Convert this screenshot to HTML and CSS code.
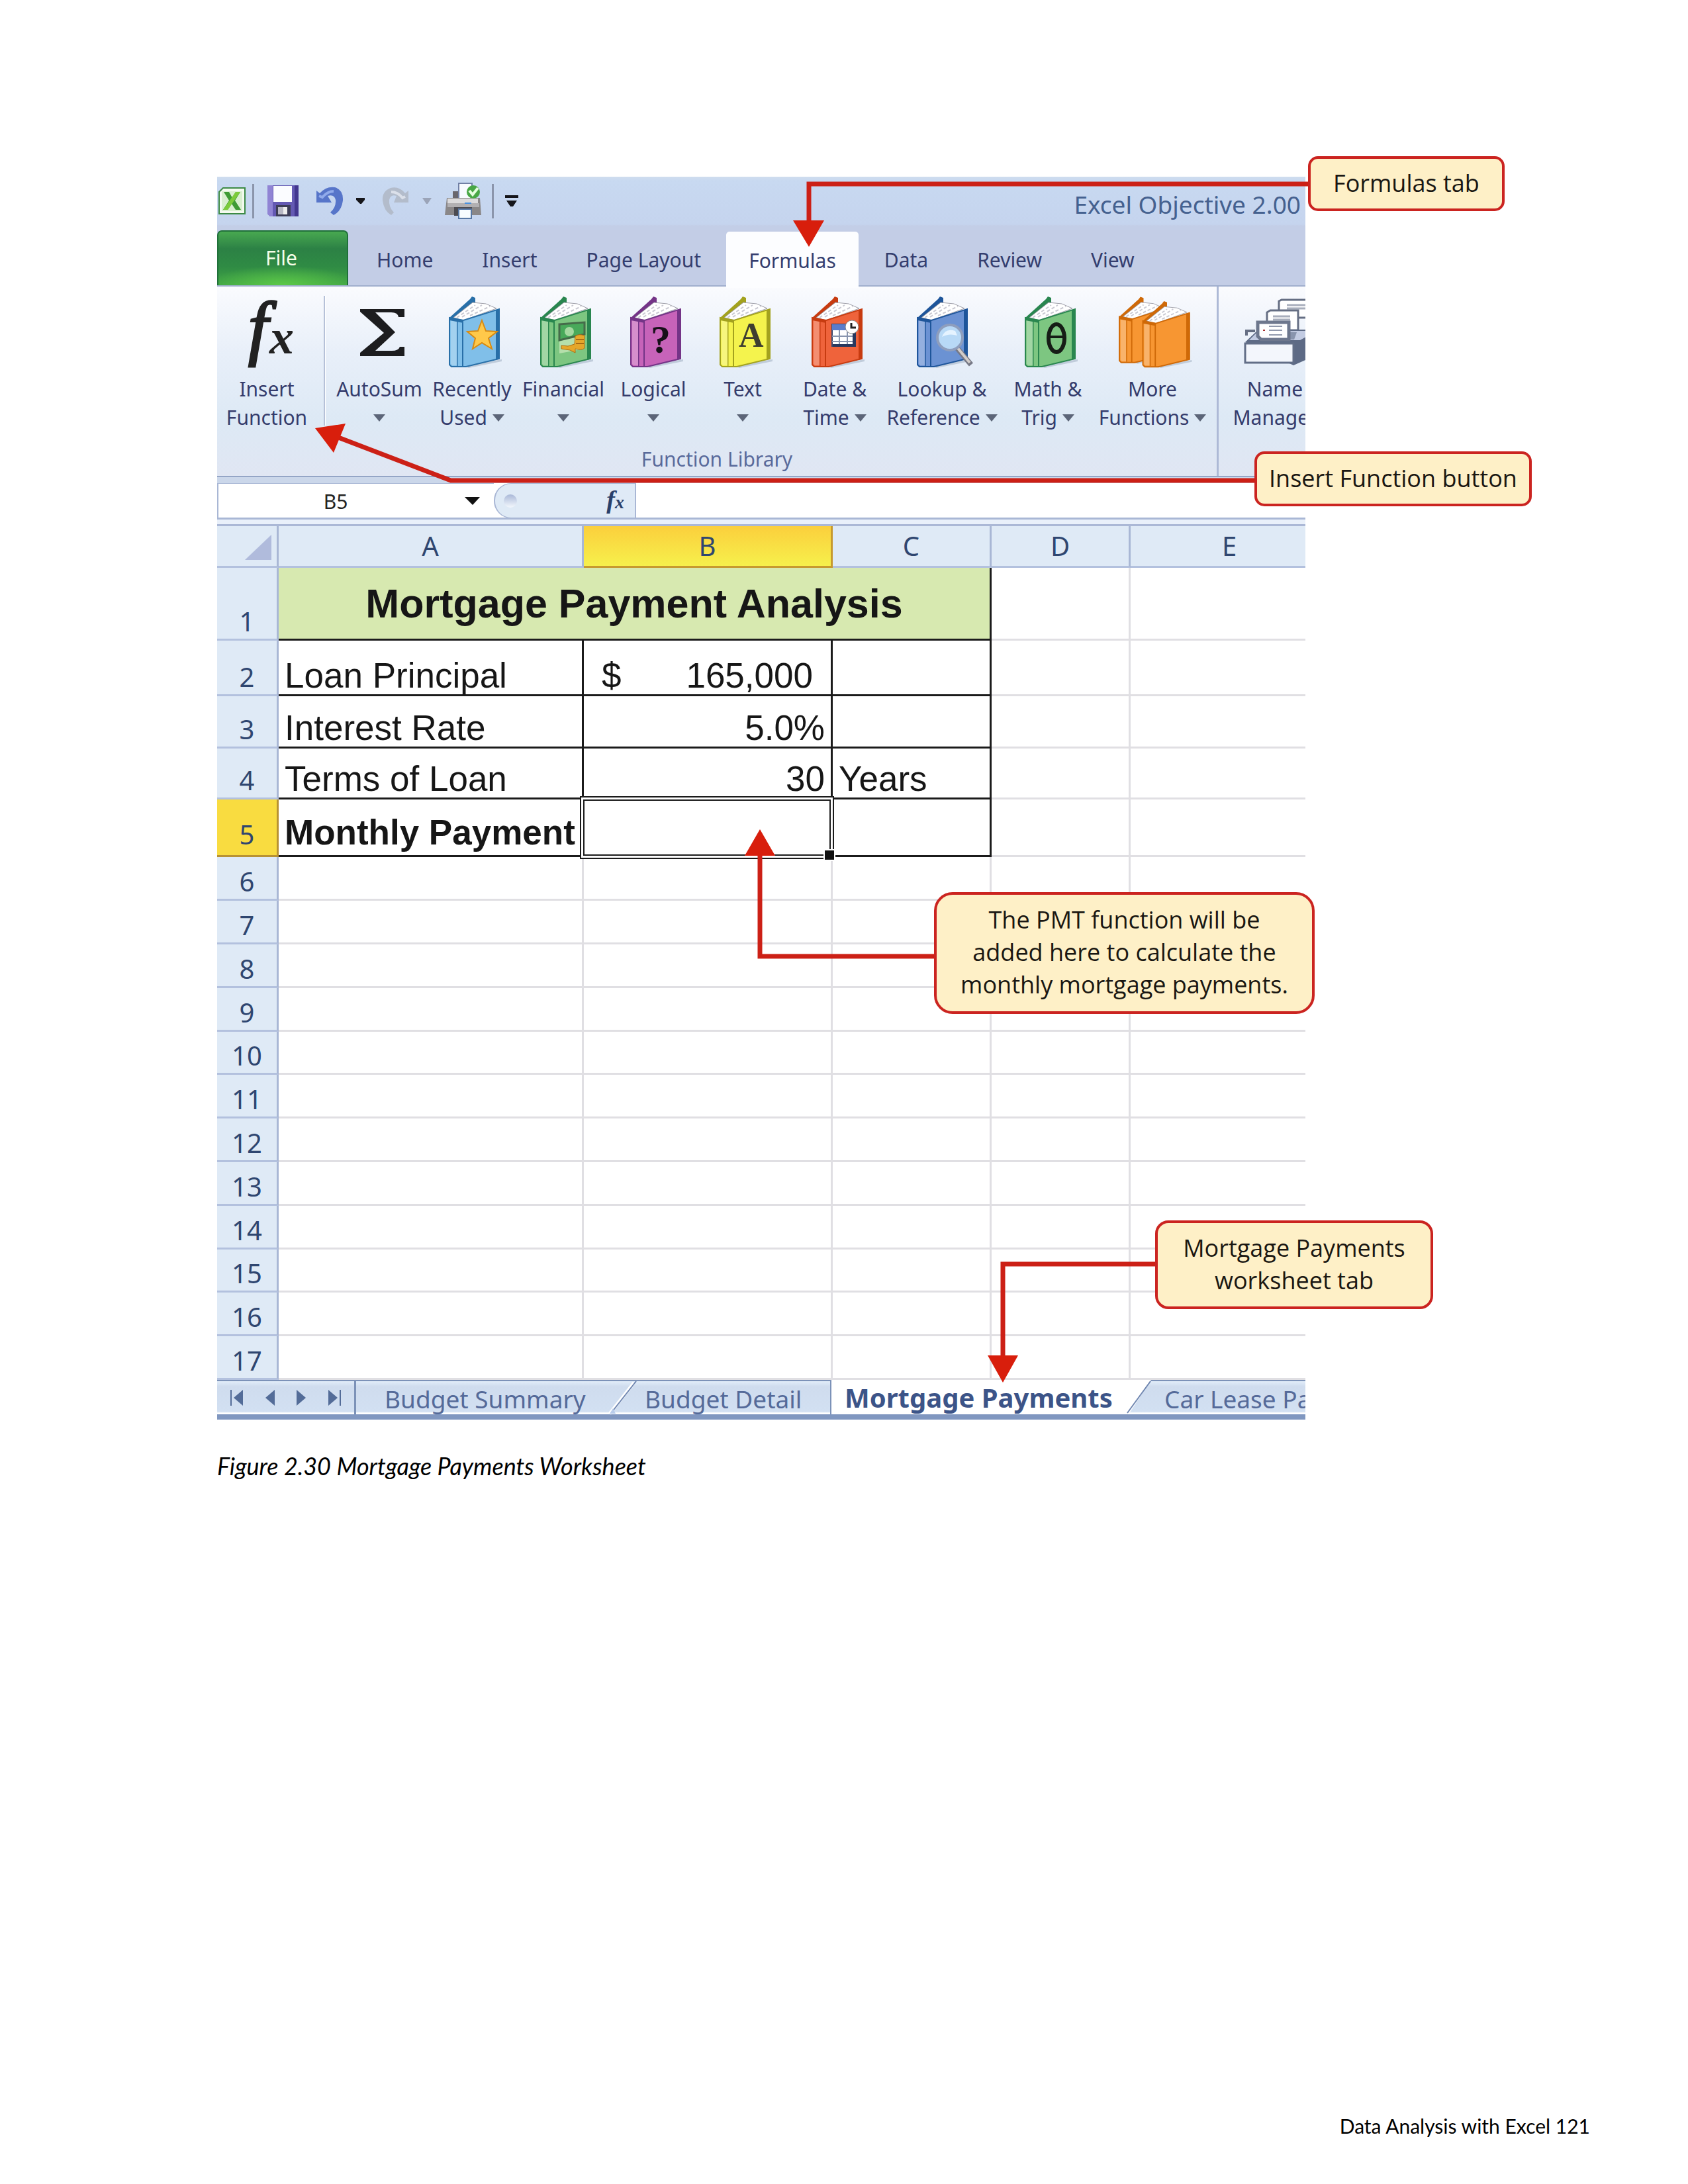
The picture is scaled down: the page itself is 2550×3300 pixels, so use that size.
FILE: index.html
```html
<!DOCTYPE html>
<html lang="en">
<head>
<meta charset="utf-8">
<title>Data Analysis with Excel</title>
<link rel="stylesheet" href="styles.css">
</head>
<body>
<svg class="defs" aria-hidden="true">
  <defs>
    <symbol id="book" viewBox="0 0 80 110">
      <path d="M24 106L80 96V99L30 109z" fill="#9aa9bd" opacity=".5"/>
      <path d="M1 33L32 5L35 1L40 3V13L10 36z" fill="var(--edge)"/>
      <path d="M7 33L36 10L56 12L72 19L22 37z" fill="#fff" stroke="#9c9ca6" stroke-width="1"/>
      <path d="M12 33l28-19M20 32l30-18M32 30l30-14" stroke="#c9c9d2" stroke-width="2" stroke-dasharray="5 3"/>
      <path d="M1 33L22 37L76 20V95L26 107H4L1 104z" fill="var(--face)" stroke="var(--edge)" stroke-width="2"/>
      <path d="M3 36L12 38V105H5L3 103z" fill="#fff" opacity=".28"/>
      <path d="M1 33L22 37V41L1 37zM12 37h1.500v69h-1.500zM20 37h2v70h-2zM71 21.500L77 20V95L71 97z" fill="var(--edge)"/>
    </symbol>
  </defs>
</svg>
<main class="page">
  <figure class="figure">
    <div class="window">
      <header class="titlebar">
        <div class="quick">
          <svg width="41" height="41" viewBox="0 0 41 41"><path d="M7 1H40V40H1V7z" fill="#f4faf0" stroke="#3c8a45" stroke-width="2"/><path d="M5 6H36V36H5z" fill="#d9efcf"/><path d="M8 7h8l5 9l5-9h7L25 20l9 14h-8l-6-9l-6 9H7l9-14z" fill="#3f9b35"/><path d="M26 7h7L14 34H7z" fill="#7ccb3a"/></svg>
          <span class="divider"></span>
          <button aria-label="Save"><svg width="49" height="49" viewBox="0 0 49 49"><path d="M1 1H48V48H5L1 44z" fill="#6459b3"/><path d="M1 1H9V48H5L1 44z" fill="#9084d4"/><path d="M42 1h6v47h-6z" fill="#43378f"/><path d="M10 2H38V26H10z" fill="#fbfcff"/><path d="M14 31H36V48H14z" fill="#3d3d57"/><path d="M17 34h14v11H17z" fill="#b8b8c4"/><path d="M25 34h6v11h-6z" fill="#eee"/></svg></button>
          <button aria-label="Undo"><svg width="42" height="45" viewBox="0 0 42 45"><path d="M1 7L6 11Q16 0 29 2Q42 6 41 22Q39 38 27 44L22 40Q31 32 30 21Q28 12 18 15L24 25H1z" fill="#5775c9"/><path d="M5 15L10 17Q18 8 27 8" fill="none" stroke="#91abeb" stroke-width="4"/></svg></button>
          <button aria-label="Undo list"><svg width="13" height="9" viewBox="0 0 13 9"><path d="M0 0H13V3L8 9H6L0 3z" fill="#15151a"/></svg></button>
          <button aria-label="Redo"><svg width="41" height="45" viewBox="0 0 41 45"><path d="M40 7L35 11Q26 0 13 3Q0 8 1 22Q3 38 14 44L18 40Q10 32 11 21Q13 12 22 15L18 25H40z" fill="#b3bccb"/><path d="M35 16L31 18Q24 9 14 9" fill="none" stroke="#dbe0ea" stroke-width="4"/></svg></button>
          <button aria-label="Redo list"><svg width="14" height="9" viewBox="0 0 14 9"><path d="M0 0H14L8 9H6z" fill="#9ba4b8"/></svg></button>
          <button aria-label="Quick Print"><svg width="55" height="55" viewBox="0 0 55 55"><path d="M12 13h32v14H12z" fill="#69676d"/><path d="M21 1H41V24H21z" fill="#f8fbff" stroke="#7180a5" stroke-width="2"/><path d="M3 23H53L55 49H0z" fill="#8a8788"/><path d="M4 24H50V35H4z" fill="#dcdbdc"/><path d="M4 31H52V37H4z" fill="#b2b0b2"/><path d="M14 37h27v13H14z" fill="#4c4b51"/><path d="M21 40H40V54H21z" fill="#f7fcff" stroke="#5878a5" stroke-width="2"/><path d="M30 31h10" stroke="#4b91dd" stroke-width="2"/><circle cx="43" cy="14" r="10" fill="#48a745"/><path d="M37 12L42 18L50 8" fill="none" stroke="#e6ffdf" stroke-width="4"/></svg></button>
          <span class="divider"></span>
          <button aria-label="Customize toolbar"><svg width="20" height="18" viewBox="0 0 20 18"><path d="M0 0H20V4H0zM2 8H18L12 17H8z" fill="#15151a"/></svg></button>
        </div>
        <h1 class="doc-title">Excel Objective 2.00</h1>
      </header>

      <nav class="tabs" aria-label="Ribbon tabs">
        <button class="tab-file">File</button>
        <button class="tab">Home</button>
        <button class="tab">Insert</button>
        <button class="tab">Page Layout</button>
        <button class="tab tab-active">Formulas</button>
        <button class="tab">Data</button>
        <button class="tab">Review</button>
        <button class="tab">View</button>
      </nav>

      <div class="ribbon">
        <section class="group">
          <div class="tools">
            <button class="tool"><svg class="icon icon-plain" width="92" height="108" viewBox="0 0 92 108"><g fill="#222" font-family="Liberation Serif, serif" font-style="italic"><text x="18" y="83" font-size="108" font-weight="400" stroke="#222" stroke-width="3">f</text><text x="50" y="86" font-size="74" font-weight="700">x</text></g></svg><span>Insert<br>Function</span></button>
            <span class="tool-divider"></span>
            <button class="tool"><svg class="icon" width="68" height="108" viewBox="0 0 68 108"><path d="M0 19H67V31H58Q57 24 47 24H23L53 54L23 82H48Q58 82 60 76H67V90H0V85L36 55L0 23z" fill="#1d1d1f"/></svg><span>AutoSum<br><i class="caret"></i></span></button>
            <button class="tool"><svg class="icon blue" width="80" height="110"><use href="#book"/><path d="M50 37L56 53L73 54L60 64L65 80L50 71L36 80L40 64L28 54L44 53z" fill="#ffc94a" stroke="#d88b12" stroke-width="2"/></svg><span>Recently<br>Used <i class="caret"></i></span></button>
            <button class="tool"><svg class="icon green" width="80" height="110"><use href="#book"/><path d="M29 43L67 40V80L29 87z" fill="#b5dfab"/><path d="M29 43L67 40V58L29 67z" fill="#48a95a" stroke="#456b4a" stroke-width="3"/><ellipse cx="44" cy="54" rx="7" ry="7" fill="#a4d8a0"/><path d="M53 61Q58 57 67 60V79Q63 83 53 80V86L45 82L32 80V75L42 76L52 73z" fill="#e5a72a" stroke="#ae6e12"/><path d="M54 66h12M54 72h12" stroke="#a86a15" stroke-width="2"/></svg><span>Financial<br><i class="caret"></i></span></button>
            <button class="tool"><svg class="icon purple" width="80" height="110"><use href="#book"/><text x="31" y="86" font-size="60" font-weight="700" font-family="Liberation Serif, serif" fill="#17101a">?</text></svg><span>Logical<br><i class="caret"></i></span></button>
            <button class="tool"><svg class="icon yellow" width="80" height="110"><use href="#book"/><text x="29" y="77" font-size="52" font-weight="700" font-family="Liberation Serif, serif" fill="#3e3e30">A</text></svg><span>Text<br><i class="caret"></i></span></button>
            <button class="tool"><svg class="icon red" width="80" height="110"><use href="#book"/><path d="M31 43H66V76H31z" fill="#fff" stroke="#38486e" stroke-width="2"/><path d="M31 43H66V52H31z" fill="#5a7ccb"/><path d="M31 61H66M31 69H66M42 52V76M54 52V76" stroke="#8995ae" stroke-width="2"/><path d="M62 52h5v25H32v-4h30z" fill="#27385e"/><circle cx="61" cy="47" r="10" fill="#fff" stroke="#888"/><path d="M60 41V48H67" fill="none" stroke="#222" stroke-width="3"/></svg><span>Date &amp;<br>Time <i class="caret"></i></span></button>
            <button class="tool"><svg class="icon navy" width="86" height="110"><use href="#book" width="80" height="110"/><path d="M60 78L82 104" stroke="#777986" stroke-width="8"/><path d="M61 78L80 101" stroke="#d2cdca" stroke-width="4"/><circle cx="50" cy="63" r="19" fill="#b8d9f6" stroke="#8e9ebd" stroke-width="4"/><path d="M38 62Q43 48 58 53L61 60Q49 56 38 62z" fill="#e5f3ff"/></svg><span>Lookup &amp;<br>Reference <i class="caret"></i></span></button>
            <button class="tool"><svg class="icon green" width="80" height="110"><use href="#book"/><ellipse cx="48" cy="64" rx="12" ry="21" fill="none" stroke="#161d16" stroke-width="6"/><path d="M36 62h24" stroke="#161d16" stroke-width="4"/></svg><span>Math &amp;<br>Trig <i class="caret"></i></span></button>
            <button class="tool"><svg class="icon orange" width="112" height="110"><use href="#book" width="75" height="104" y="0"/><use href="#book" x="35" y="7" width="76" height="103"/></svg><span>More<br>Functions <i class="caret"></i></span></button>
          </div>
          <h2 class="group-label">Function Library</h2>
        </section>
        <section class="group group-names">
          <button class="tool"><svg class="icon icon-names" width="124" height="110" viewBox="0 0 124 110"><g fill="#fff" stroke="#656e83" stroke-width="3"><path d="M53 8L57 6H105V33H53z"/><path d="M65 14h28M65 19h28" stroke="#a8aebc"/><path d="M35 25L40 22H82V52H35z"/><path d="M44 31h26M44 36h26" stroke="#a8aebc"/></g><path d="M2 70L22 51H112L118 58V86L75 105z" fill="#5d6a85"/><path d="M8 67L22 53H110L85 67z" fill="#c2cbe2"/><path d="M22 52L28 66H76L80 55z" fill="#8894ad"/><path d="M21 40H68V66H26L21 61z" fill="#fff" stroke="#6d778d" stroke-width="5"/><path d="M38 46h20M38 52h20M38 59h20" stroke="#9199ad" stroke-width="2"/><path d="M29 52h3" stroke="#a33" stroke-width="2"/><path d="M2 72H75V101H2z" fill="#f3f6fc" stroke="#626e87" stroke-width="3"/><path d="M4 60V53H17" fill="none" stroke="#656e83" stroke-width="4"/></svg><span>Name<br>Manager</span></button>
        </section>
      </div>

      <div class="formula-bar">
        <div class="name-box"><input aria-label="Name box" value="B5"><svg width="23" height="12" viewBox="0 0 23 12"><path d="M0 0H23L12 12z" fill="#111"/></svg></div>
        <div class="fx-area"><span class="knob"></span><button class="fx" aria-label="Insert function">f<small>x</small></button></div>
        <input class="formula" aria-label="Formula">
      </div>

      <table class="sheet">
        <colgroup><col class="c-head"><col class="c-a"><col class="c-b"><col class="c-c"><col class="c-d"><col class="c-e"></colgroup>
        <thead><tr><th class="corner"><svg width="40" height="38" viewBox="0 0 40 38"><path d="M40 0V38H0z" fill="#b0bbdc"/></svg></th><th>A</th><th class="picked">B</th><th>C</th><th>D</th><th>E</th></tr></thead>
        <tbody>
          <tr class="r-title"><th>1</th><td colspan="3" class="banner">Mortgage Payment Analysis</td><td></td><td></td></tr>
          <tr class="r-two boxed"><th>2</th><td>Loan Principal</td><td><div class="money"><span>$</span><span>165,000</span></div></td><td></td><td></td><td></td></tr>
          <tr class="r-three boxed"><th>3</th><td>Interest Rate</td><td class="num">5.0%</td><td></td><td></td><td></td></tr>
          <tr class="r-four boxed"><th>4</th><td>Terms of Loan</td><td class="num">30</td><td>Years</td><td></td><td></td></tr>
          <tr class="r-five boxed"><th class="picked-row">5</th><td class="strong">Monthly Payment</td><td class="active-cell"><span class="selection"></span></td><td></td><td></td><td></td></tr>
          <tr><th>6</th><td></td><td></td><td></td><td></td><td></td></tr>
          <tr><th>7</th><td></td><td></td><td></td><td></td><td></td></tr>
          <tr><th>8</th><td></td><td></td><td></td><td></td><td></td></tr>
          <tr><th>9</th><td></td><td></td><td></td><td></td><td></td></tr>
          <tr><th>10</th><td></td><td></td><td></td><td></td><td></td></tr>
          <tr><th>11</th><td></td><td></td><td></td><td></td><td></td></tr>
          <tr><th>12</th><td></td><td></td><td></td><td></td><td></td></tr>
          <tr><th>13</th><td></td><td></td><td></td><td></td><td></td></tr>
          <tr><th>14</th><td></td><td></td><td></td><td></td><td></td></tr>
          <tr><th>15</th><td></td><td></td><td></td><td></td><td></td></tr>
          <tr><th>16</th><td></td><td></td><td></td><td></td><td></td></tr>
          <tr><th>17</th><td></td><td></td><td></td><td></td><td></td></tr>
        </tbody>
      </table>

      <nav class="sheet-tabs" aria-label="Worksheets">
        <div class="sheet-nav">
          <button aria-label="First sheet"><svg width="19" height="24" viewBox="0 0 19 24"><path d="M0 0h2v24H0zM19 0V24L5 12z"/></svg></button>
          <button aria-label="Previous sheet"><svg width="14" height="24" viewBox="0 0 14 24"><path d="M14 0V24L0 12z"/></svg></button>
          <button aria-label="Next sheet"><svg width="14" height="24" viewBox="0 0 14 24"><path d="M0 0V24L14 12z"/></svg></button>
          <button aria-label="Last sheet"><svg width="19" height="24" viewBox="0 0 19 24"><path d="M17 0h2v24h-2zM0 0V24L14 12z"/></svg></button>
        </div>
        <button class="sheet-tab tab-summary">Budget Summary</button>
        <svg class="slash" width="41" height="50" viewBox="0 0 41 50"><path d="M0 49L37 2" stroke="#fff" stroke-width="5"/><path d="M3 47L40 0" stroke="#6f86b0" stroke-width="2"/><path d="M0 49L5 41L9 49z" fill="#b9cdec"/></svg>
        <button class="sheet-tab tab-detail">Budget Detail</button>
        <button class="sheet-tab tab-mortgage" aria-current="page">Mortgage Payments</button>
        <svg class="slash" width="35" height="50" viewBox="0 0 35 50"><path d="M0 -2H36L2 50H0z" fill="#fff"/><path d="M0 48L35 0" stroke="#6f86b0" stroke-width="2"/></svg>
        <button class="sheet-tab tab-lease">Car Lease Payments</button>
      </nav>
    </div>

    <svg class="arrows" width="1" height="1" aria-hidden="true">
      <g fill="none" stroke="#cc2016" stroke-width="7">
        <path d="M1650 11H894V70"/><path d="M1570 459H353L178 392"/><path d="M1085 1178H820V1022"/><path d="M1420 1643H1187V1785"/>
      </g>
      <path d="M870 66h47l-23 40zM148 380l46-7l-18 44zM797 1026h46l-23-40zM1164 1781h46l-23 41z" fill="#d81e0c"/>
    </svg>
    <div class="callout note-formulas">Formulas tab</div>
    <div class="callout note-insert">Insert Function button</div>
    <div class="callout note-pmt">The PMT function will be<br>added here to calculate the<br>monthly mortgage payments.</div>
    <div class="callout note-sheet">Mortgage Payments<br>worksheet tab</div>
    <figcaption class="caption">Figure 2.30 Mortgage Payments Worksheet</figcaption>
  </figure>
  <footer class="footer">Data Analysis with Excel 121</footer>
</main>
</body>
</html>
```

FILE: styles.css
```css
* { box-sizing: border-box; }

body {
  margin: 0;
  background: #fff;
  color: #000;
  font-family: "Noto Sans", "Open Sans", sans-serif;
}

button, input {
  margin: 0;
  padding: 0;
  border: 0;
  background: none;
  color: inherit;
  font: inherit;
}

svg { display: block; }

.defs { position: absolute; width: 0; height: 0; }

.page {
  display: flex;
  flex-direction: column;
  min-height: 100vh;
  padding: 267px 148px 68px 328px;
}

.figure {
  position: relative;
  width: 100%;
  max-width: 1644px;
  margin: 0;
}

.window { overflow: hidden; background: #fff; }

/* Title bar */
.titlebar {
  display: flex;
  justify-content: space-between;
  align-items: flex-start;
  height: 81px;
  padding: 9px 7px 0 2px;
  background: linear-gradient(#cfddee 0, #c8d9f1 6px, #c5d4ee 72px, #c3cee7 74px);
}

.quick {
  display: grid;
  grid-template-columns: 51px 22px 74px 61px 39px 61px 34px 71px 20px 20px;
  align-items: center;
  height: 54px;
}

.divider { width: 3px; height: 52px; background: #8b95ab; }

.doc-title {
  margin: 7px 0 0;
  color: #45618f;
  font-size: 37px;
  font-weight: 400;
  line-height: 52px;
  white-space: nowrap;
}

/* Ribbon tabs */
.tabs {
  display: flex;
  height: 85px;
  background: #c3cde6;
  border-bottom: 2px solid #a0afcd;
  color: #343d6e;
  font-size: 30px;
}

.tab-file {
  width: 198px;
  margin-right: 6px;
  padding: 0 4px 2px 0;
  border: 2px solid #20703a;
  border-bottom: 0;
  border-radius: 7px 7px 0 0;
  background:
    radial-gradient(ellipse 60% 36% at 50% 100%, #5cc848, transparent),
    linear-gradient(#48a850, #2c8145 32%, #2f8b44 65%, #41a545);
  color: #f6ffe9;
}

.tab { padding: 5px 37px 0; white-space: nowrap; }

.tab-active {
  height: 85px;
  padding: 1px 34px 0;
  margin: 2px 2px 0 1px;
  border-radius: 5px 5px 0 0;
  background: #fcfdff;
}

/* Ribbon body */
.ribbon {
  display: flex;
  height: 288px;
  border-bottom: 2px solid #94a5c6;
  background: linear-gradient(#fafbfe, #e8eff9 35%, #dde9f5 70%, #e0e6f3);
  color: #353c6c;
}

.group {
  flex: 0 0 1513px;
  padding-top: 14px;
  border-right: 3px solid #adb9d6;
}

.group-names { flex: 0 0 170px; padding-left: 10px; border: 0; }

.tools {
  display: grid;
  grid-template-columns: 150px 25px 140px 140px 136px 136px 134px 144px 180px 140px 176px;
}

.tool {
  display: flex;
  flex-direction: column;
  align-items: center;
  gap: 9px;
  font-size: 30px;
  line-height: 43px;
  white-space: nowrap;
}

.group-names .tool { width: 150px; }

.icon { height: 110px; margin-left: 10px; }
.icon-plain { margin-left: 0; overflow: visible; }
.icon-names { margin-left: 30px; }

.tool-divider {
  justify-self: center;
  width: 3px;
  height: 196px;
  border-right: 1px solid #fff;
  background: #b6c1d8;
}

.caret {
  display: inline-block;
  border: 9px solid transparent;
  border-top: 11px solid #5c6578;
  border-bottom: 0;
  vertical-align: 5px;
}

.group-label {
  margin: 20px 0 0;
  color: #596a9b;
  font-size: 30px;
  font-weight: 400;
  line-height: 43px;
  text-align: center;
}

.blue { --face: #80bfe9; --edge: #286fa8; }
.green { --face: #7dc681; --edge: #29864f; }
.purple { --face: #c763b9; --edge: #743487; }
.yellow { --face: #f4f34d; --edge: #a3a21e; }
.red { --face: #ef633b; --edge: #c73b10; }
.navy { --face: #6b92d3; --edge: #1e559a; }
.orange { --face: #f79632; --edge: #cf6907; }

/* Formula bar */
.formula-bar {
  display: flex;
  height: 74px;
  border-top: 9px solid #cbd7ea;
  border-bottom: 3px solid #abb8d6;
  background: linear-gradient(#fff 52px, #a9b7d5 52px, #a9b7d5 55px, #e9f0fa 55px);
}

.name-box {
  display: flex;
  align-items: center;
  width: 418px;
  height: 53px;
  padding-right: 21px;
  border-left: 2px solid #a9b7d5;
  border-top: 1px solid #a9b7d5;
}

.name-box input {
  width: 100%;
  min-width: 0;
  padding-right: 18px;
  color: #222;
  font-size: 30px;
  text-align: center;
}

.name-box svg { flex: none; }

.fx-area {
  display: flex;
  justify-content: space-between;
  align-items: center;
  width: 215px;
  height: 53px;
  padding: 0 16px 0 13px;
  border: 2px solid #a9b7d5;
  border-width: 1px 2px 1px 2px;
  border-radius: 26px 0 0 26px;
  background: #dfeaf6;
}

.knob {
  width: 20px;
  height: 20px;
  border-radius: 50%;
  background: linear-gradient(#a9b8d8, #f4f8fd);
}

.fx {
  color: #29406a;
  font: italic 700 38px/38px "Liberation Serif", serif;
}

.fx small { font-size: 28px; }

.formula { flex: 1; height: 52px; min-width: 0; }

/* Worksheet grid */
.sheet {
  width: 1681px;
  border-spacing: 0;
  table-layout: fixed;
  color: #161616;
  font-family: "Liberation Sans", Arial, sans-serif;
  font-size: 53px;
  line-height: 53px;
}

.c-head { width: 93px; }
.c-a { width: 461px; }
.c-b { width: 376px; }
.c-c { width: 240px; }
.c-d { width: 210px; }

.sheet th {
  padding: 0 0 6px;
  border-right: 3px solid #a9b7d5;
  border-bottom: 3px solid #b3c1de;
  background: #dfeaf6;
  color: #2f4670;
  font: 400 40px/40px "Noto Sans", sans-serif;
  vertical-align: bottom;
}

.sheet thead th { height: 63px; padding: 0; vertical-align: middle; }

.sheet thead .corner { padding: 4px 8px 0 0; }
.corner svg { margin-left: auto; }

.sheet thead .picked {
  border-color: #c79a2f;
  background: linear-gradient(#fbcf3c, #f6f04c);
}

.sheet .picked-row { border-color: #b89233; background: #f9dc40; }

.sheet td {
  height: 66px;
  padding: 0 9px 2px;
  border-right: 3px solid #e0dfe3;
  border-bottom: 3px solid #e0dfe3;
  vertical-align: bottom;
  white-space: nowrap;
}

.sheet tr:nth-child(5n + 10) td { height: 65px; }

.sheet .r-title td { height: 110px; }
.sheet .r-two td { height: 84px; }
.sheet .r-three td { height: 79px; }
.sheet .r-four td { height: 77px; }
.sheet .r-five td { height: 87px; padding-bottom: 8px; }
.sheet .r-five th { padding-bottom: 11px; }

.sheet .banner {
  padding: 0;
  border-color: #1b1b1b;
  background: #d7e9b0;
  font-size: 61px;
  font-weight: 700;
  line-height: 60px;
  text-align: center;
  vertical-align: middle;
}

.boxed td:nth-child(-n + 4) { border-color: #1b1b1b; }

.sheet .num { text-align: right; }
.strong { font-weight: 700; }

.money { display: flex; justify-content: space-between; padding: 0 18px; }

.active-cell { position: relative; }

.selection {
  position: absolute;
  inset: -5px -5px -6px -6px;
  border: 7px double #1b1b1b;
  background: #fff;
}

.selection::after {
  content: "";
  position: absolute;
  right: -9px;
  bottom: -10px;
  width: 14px;
  height: 14px;
  border: 2px solid #fff;
  background: #111;
}

/* Worksheet tabs */
.sheet-tabs {
  display: flex;
  height: 60px;
  border-top: 2px solid #7c92b8;
  border-bottom: 8px solid #8097c0;
  background: linear-gradient(#e2edf9, #cfdcee 8px, #d2e0f2 46px, #fff 48px);
  color: #556a99;
  font-size: 37px;
}

.sheet-nav {
  display: flex;
  flex: 0 0 210px;
  justify-content: space-between;
  align-items: center;
  padding: 0 20px;
  border-right: 3px solid #7c92b8;
  fill: #536c98;
}

.sheet-tab {
  flex: none;
  line-height: 53px;
  text-align: left;
  white-space: nowrap;
}

.slash { flex: none; overflow: visible; }

.tab-summary { width: 383px; padding-left: 43px; }
.tab-detail { width: 292px; padding-left: 12px; }

.tab-mortgage {
  width: 449px;
  height: 52px;
  margin-top: -2px;
  padding-left: 20px;
  border-left: 2px solid #7c92b8;
  background: #fff;
  color: #3c5488;
  font-size: 40px;
  font-weight: 700;
}

.tab-lease { padding-left: 21px; }

/* Annotations lying over the window */
.arrows { position: absolute; top: 0; left: 0; overflow: visible; }

.callout {
  position: absolute;
  display: flex;
  justify-content: center;
  align-items: center;
  padding-bottom: 3px;
  border: 4px solid #cb2420;
  border-radius: 15px;
  background: #fef0c7;
  color: #1a1712;
  font-family: "Open Sans", sans-serif;
  font-size: 36px;
  line-height: 49px;
  text-align: center;
  white-space: nowrap;
}

.note-formulas { top: -31px; left: 1648px; width: 297px; height: 83px; }
.note-insert { top: 415px; left: 1567px; width: 419px; height: 83px; }
.note-pmt { top: 1081px; left: 1083px; width: 575px; height: 184px; border-radius: 28px; }
.note-sheet { top: 1577px; left: 1417px; width: 420px; height: 134px; border-radius: 20px; }

.caption {
  margin-top: 45px;
  font: italic 400 36px/50px Lato, sans-serif;
}

.footer {
  margin-top: auto;
  font: 400 30px/40px Lato, sans-serif;
  text-align: right;
}
```
